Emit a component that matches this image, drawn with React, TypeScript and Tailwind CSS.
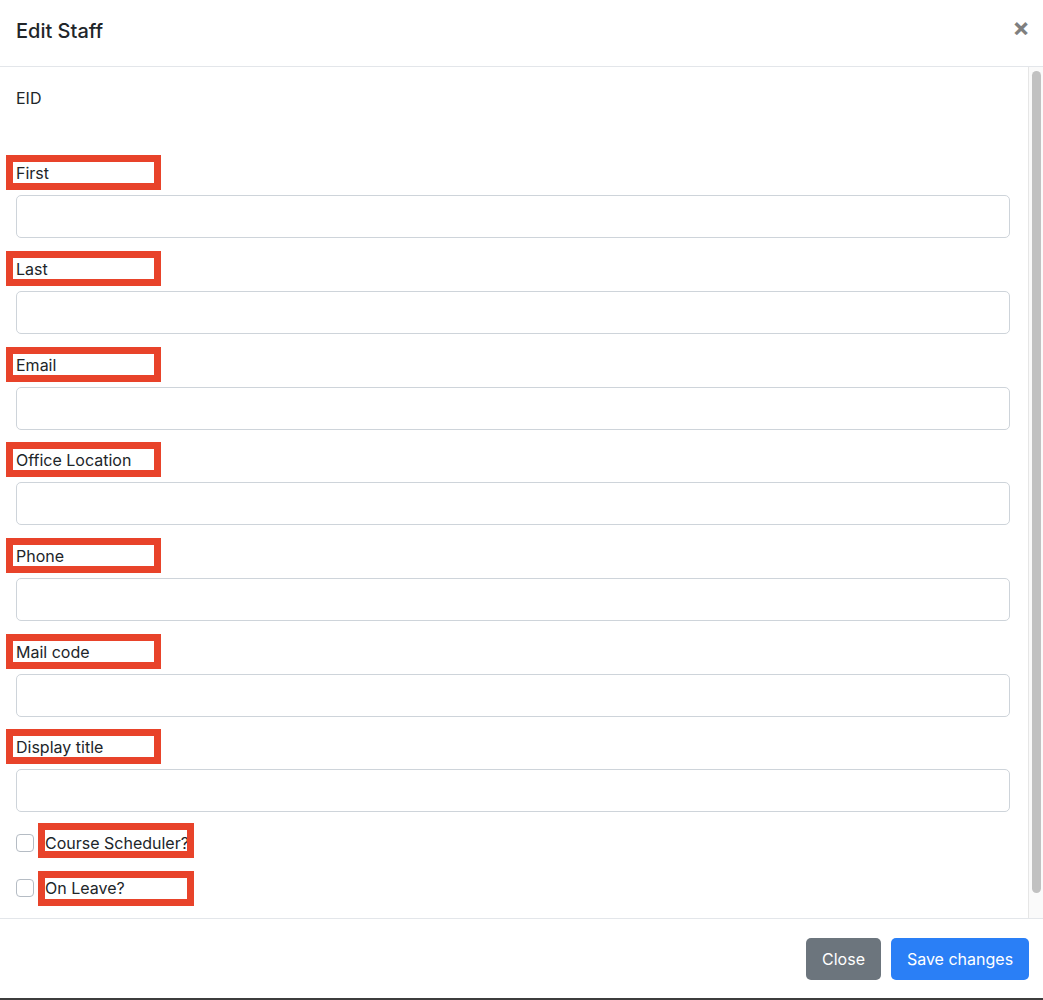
import React from 'react';

const fields = [
  { label: 'First', tight: false },
  { label: 'Last', tight: false },
  { label: 'Email', tight: true },
  { label: 'Office Location', tight: false },
  { label: 'Phone', tight: false },
  { label: 'Mail code', tight: true },
  { label: 'Display title', tight: false },
];

function FieldGroup({ label, tight }: { label: string; tight: boolean }) {
  return (
    <div className={tight ? 'mb-[18px]' : 'mb-[19px]'}>
      <div className="relative h-6 leading-6">
        <span>{label}</span>
        {/* annotation box */}
        <div className="absolute -left-[10px] -top-[6px] w-[155px] h-[35px] border-[7px] border-[#e8432a]" />
      </div>
      <input
        type="text"
        className="mt-[10px] block w-full h-[43px] rounded-[5px] border border-[#ced4da] bg-white px-3 outline-none"
      />
    </div>
  );
}

function CheckRow({ label, className, boxTop }: { label: string; className?: string; boxTop: string }) {
  return (
    <div className={`flex items-center h-6 ${className ?? ''}`}>
      <span className="w-[18px] h-[18px] rounded-[4px] border border-[#b5bcc4] bg-white shrink-0" />
      <div className="relative ml-[11px] leading-6 whitespace-nowrap">
        <span>{label}</span>
        <div className={`absolute -left-[7px] ${boxTop} w-[156px] h-[35px] border-[7px] border-[#e8432a]`} />
      </div>
    </div>
  );
}

export default function App() {
  return (
    <div
      className="w-[1043px] h-[1000px] bg-white flex flex-col border-b-2 border-[#3d3d3d] text-[16px] text-[#212529]"
      style={{ fontFamily: 'Inter, "Liberation Sans", sans-serif' }}
    >
      {/* Header */}
      <div className="h-[67px] shrink-0 border-b border-[#e3e6ea] flex items-center justify-between pl-4 pr-[13px]">
        <h1 className="text-[20px] font-medium leading-[30px] -mt-[4px]">Edit Staff</h1>
        <button className="text-[26px] font-bold leading-none text-black/50 -mt-[10px]">×</button>
      </div>

      {/* Body */}
      <div className="flex-1 flex min-h-0">
        <div className="flex-1 pl-4 pr-[18px] pt-[19px]">
          <div className="h-6 leading-6">EID</div>
          <div className="mt-[51px]">
            {fields.map((f) => (
              <FieldGroup key={f.label} label={f.label} tight={f.tight} />
            ))}
          </div>
          <CheckRow label="Course Scheduler?" className="mt-[2px]" boxTop="-top-[8px]" />
          <CheckRow label="On Leave?" className="mt-[21px]" boxTop="-top-[5px]" />
        </div>
        {/* Scrollbar */}
        <div className="w-[15px] shrink-0 border-l border-[#e6e6e6] bg-[#fafafa] pt-[4px] pb-[25px] flex justify-center">
          <div className="w-[9px] h-full rounded-full bg-[#c1c1c1]" />
        </div>
      </div>

      {/* Footer */}
      <div className="h-[80px] shrink-0 border-t border-[#e3e6ea] flex items-start justify-end gap-[10px] pr-[14px] pt-[19px]">
        <button className="h-[42px] w-[75px] rounded-[5px] bg-[#6c757d] text-white">Close</button>
        <button className="h-[42px] w-[138px] rounded-[5px] bg-[#2a7ff6] text-white">Save changes</button>
      </div>
    </div>
  );
}
